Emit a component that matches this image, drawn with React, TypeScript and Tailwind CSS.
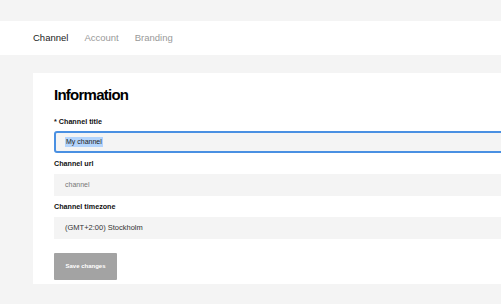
export default function App() {
  return (
    <div className="min-h-screen bg-[#f4f4f4] font-['Liberation_Sans',Arial,sans-serif] pt-[21px] overflow-hidden">
      {/* Tabs */}
      <nav className="h-[34px] bg-white flex items-center gap-[16px] pl-[33px] text-[9.5px]">
        <span className="text-[#222]">Channel</span>
        <span className="text-[#999]">Account</span>
        <span className="text-[#999]">Branding</span>
      </nav>

      {/* Card */}
      <section className="ml-[33px] mt-[18px] w-[600px] h-[211px] bg-white pl-[21px] pt-[14px]">
        <h1 className="text-[15px] font-bold tracking-tighter text-black leading-none">Information</h1>

        <div className="mt-[15px] w-[520px]">
          <Label text="* Channel title" />
          <div className="mt-[4px] h-[22px] rounded-[3px] border-2 border-[#4a90e2] bg-[#f4f4f4] flex items-center pl-[9px]">
            <span className="text-[7px] text-[#222] bg-[#b3d4fc] px-[1px]">My channel</span>
          </div>

          <Label text="Channel url" className="mt-[6px]" />
          <div className="mt-[5px] h-[22px] bg-[#f4f4f4] flex items-center pl-[11px] text-[7px] text-[#777]">
            channel
          </div>

          <Label text="Channel timezone" className="mt-[6px]" />
          <div className="mt-[5px] h-[22px] bg-[#f4f4f4] flex items-center pl-[11px] text-[7.5px] text-[#333]">
            (GMT+2:00) Stockholm
          </div>

          <button className="mt-[14px] w-[63px] h-[27px] bg-[#a3a3a3] text-white text-[6px] font-bold rounded-[1px]">
            Save changes
          </button>
        </div>
      </section>
    </div>
  );
}

function Label({ text, className = '' }: { text: string; className?: string }) {
  return (
    <div className={`text-[7.2px] font-bold text-[#111] leading-[10px] ${className}`}>{text}</div>
  );
}
